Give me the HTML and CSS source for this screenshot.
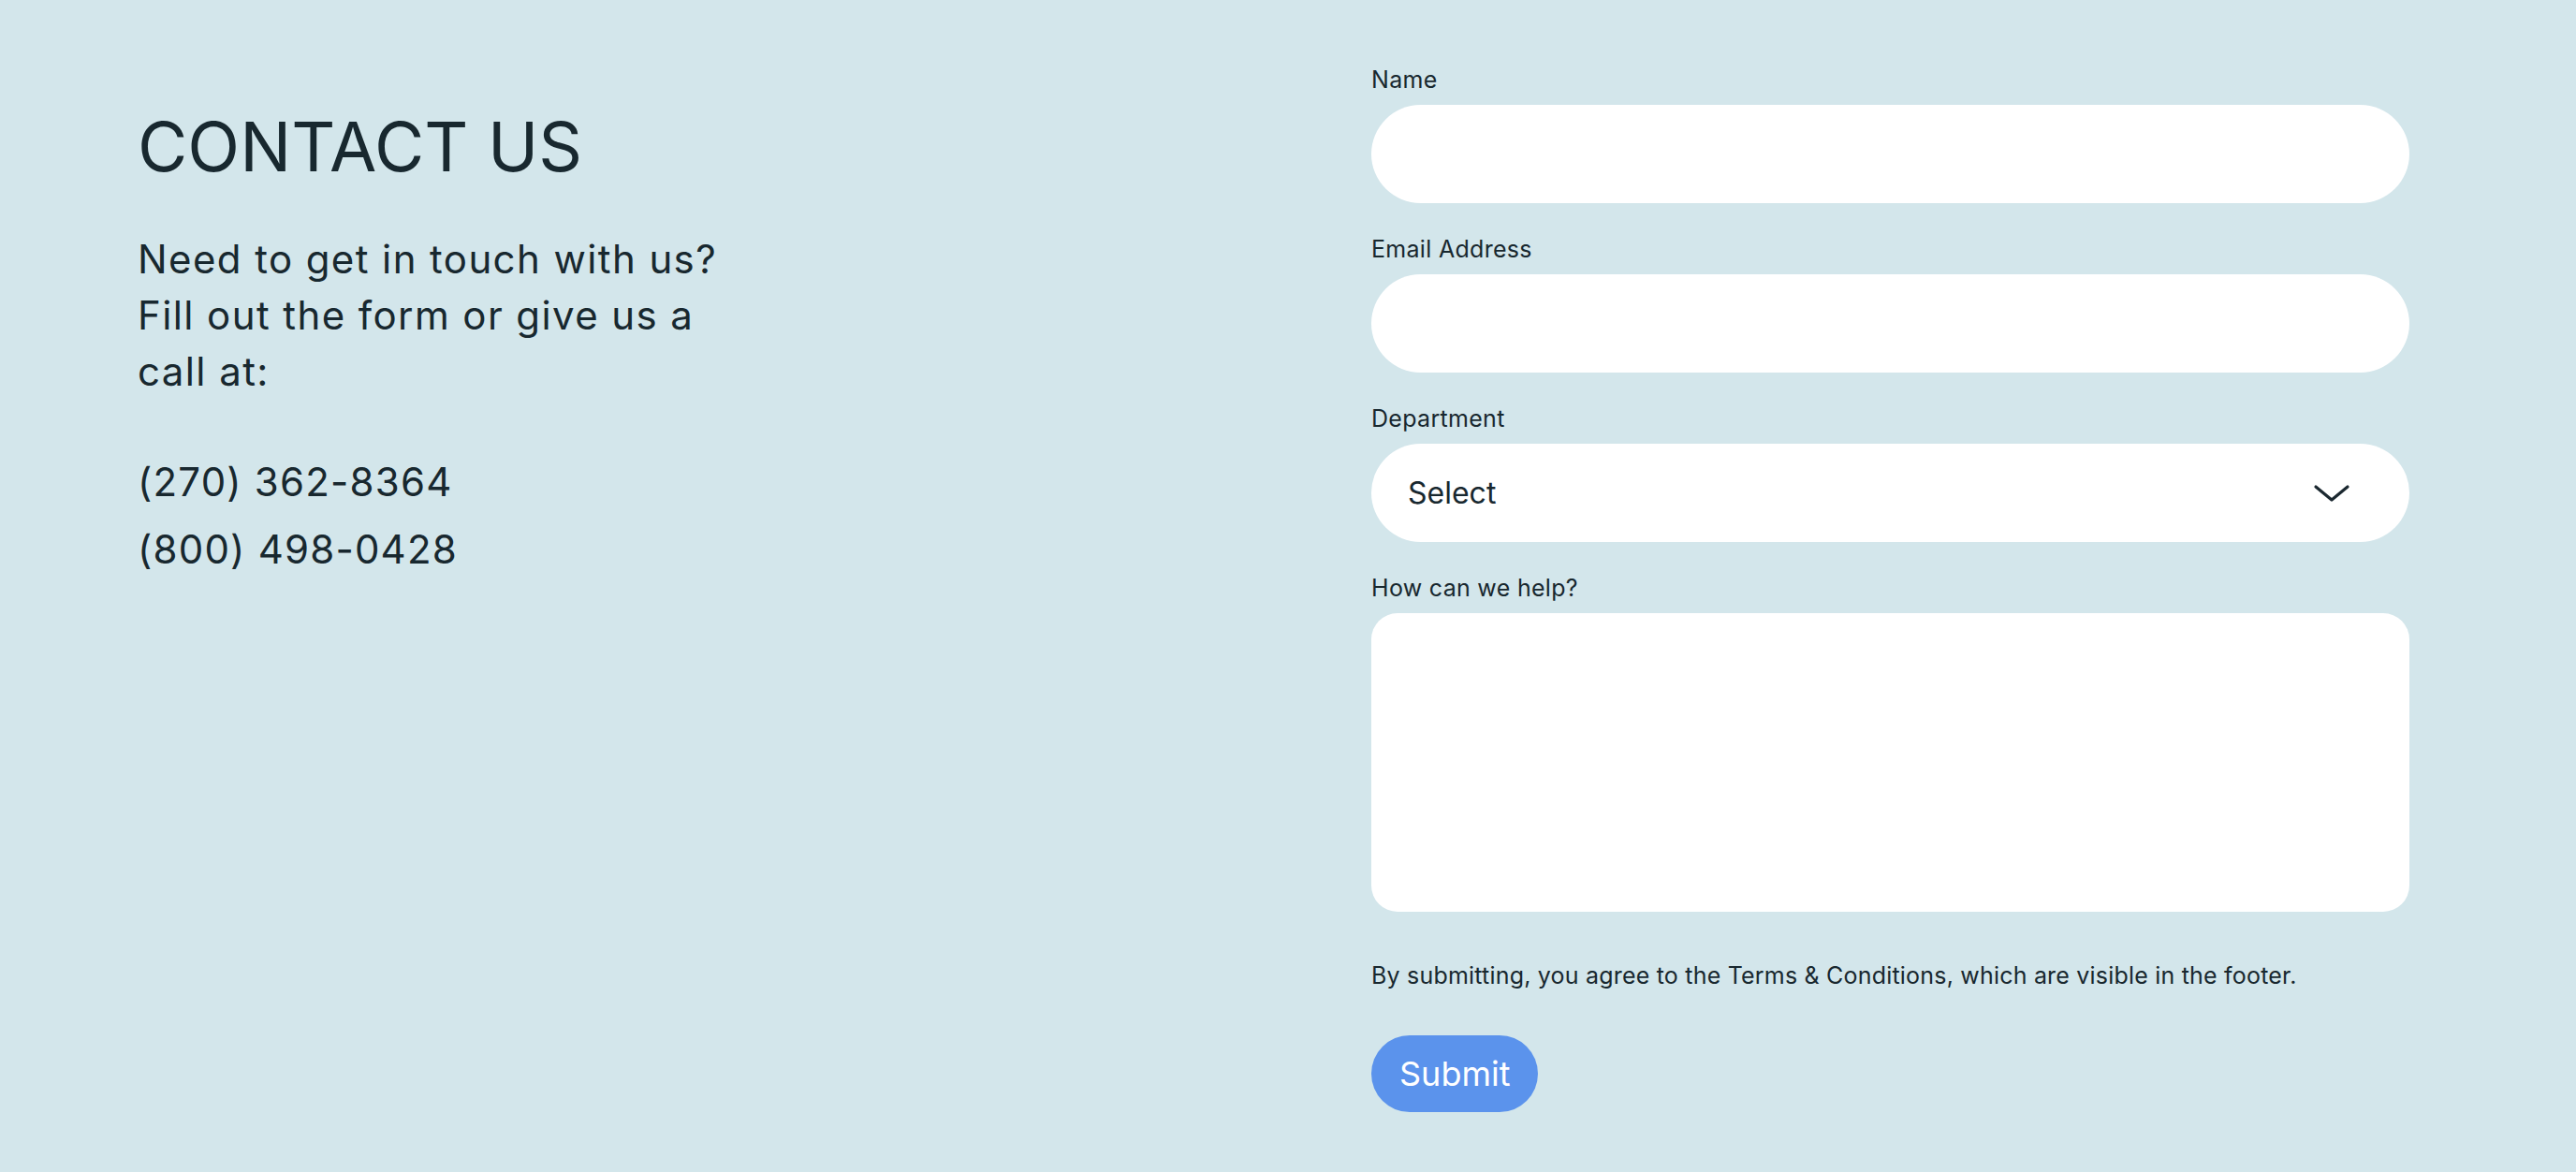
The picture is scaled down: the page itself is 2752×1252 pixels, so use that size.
FILE: index.html
```html
<!DOCTYPE html>
<html lang="en">
<head>
<meta charset="utf-8">
<title>Contact Us</title>
<link rel="stylesheet" href="styles.css">
</head>
<body>
<main class="contact">
  <section class="contact-intro">
    <h1 class="contact-title">CONTACT US</h1>
    <p class="contact-lead">Need to get in touch with us? Fill out the form or give us a call at:</p>
    <div class="contact-phones">
      <p class="phone">(270) 362-8364</p>
      <p class="phone">(800) 498-0428</p>
    </div>
  </section>

  <form class="contact-form">
    <div class="field">
      <label class="field-label" for="name">Name</label>
      <input class="field-input" id="name" type="text">
    </div>
    <div class="field">
      <label class="field-label" for="email">Email Address</label>
      <input class="field-input" id="email" type="email">
    </div>
    <div class="field">
      <label class="field-label" for="dept">Department</label>
      <div class="select-wrap">
        <select class="field-input field-select" id="dept">
          <option>Select</option>
        </select>
        <svg class="select-chevron" viewBox="0 0 40 20" width="40" height="20" aria-hidden="true">
          <path d="M3 3 L20 17 L37 3" fill="none" stroke="#1b2830" stroke-width="3.2" stroke-linecap="round" stroke-linejoin="round"/>
        </svg>
      </div>
    </div>
    <div class="field">
      <label class="field-label" for="help">How can we help?</label>
      <textarea class="field-input field-textarea" id="help"></textarea>
    </div>
    <p class="terms">By submitting, you agree to the Terms &amp; Conditions, which are visible in the footer.</p>
    <button class="submit" type="submit">Submit</button>
  </form>
</main>
</body>
</html>
```

FILE: styles.css
```css
* {
  box-sizing: border-box;
}

html, body {
  margin: 0;
  padding: 0;
}

body {
  background: #d3e6eb;
  color: #18282f;
  font-family: Inter, "Liberation Sans", sans-serif;
  min-height: 1252px;
}

.contact {
  display: flex;
  justify-content: space-between;
  align-items: flex-start;
  padding: 0 178px 0 147px;
}

/* Left column */
.contact-intro {
  padding-top: 113px;
}

.contact-title {
  margin: 0;
  font-size: 73px;
  font-weight: 400;
  line-height: 88px;
}

.contact-lead {
  margin: 46px 0 0;
  max-width: 650px;
  font-size: 42px;
  line-height: 60px;
  letter-spacing: 1.4px;
}

.contact-phones {
  margin-top: 58px;
  display: flex;
  flex-direction: column;
  gap: 12px;
}

.phone {
  margin: 0;
  font-size: 42px;
  line-height: 60px;
  letter-spacing: 1.2px;
}

/* Form */
.contact-form {
  width: 1109px;
  padding-top: 70px;
  display: flex;
  flex-direction: column;
}

.field {
  display: flex;
  flex-direction: column;
  gap: 12px;
  margin-bottom: 34px;
}

.field:nth-last-of-type(1) {
  margin-bottom: 0;
}

.field-label {
  font-size: 25px;
  line-height: 30px;
  letter-spacing: 0.3px;
}

.field-input {
  display: block;
  width: 100%;
  height: 105px;
  border: none;
  border-radius: 53px;
  background: #ffffff;
  font-family: inherit;
  font-size: 32px;
  color: #18282f;
  padding: 0 39px;
  outline: none;
}

.select-wrap {
  position: relative;
}

.field-select {
  appearance: none;
  -webkit-appearance: none;
}

.select-chevron {
  position: absolute;
  right: 63px;
  top: 43px;
  width: 40px;
  height: 20px;
  pointer-events: none;
}

.field-textarea {
  height: 319px;
  border-radius: 28px;
  resize: none;
  padding: 30px 39px;
}

.terms {
  margin: 53px 0 0;
  font-size: 25px;
  line-height: 30px;
  letter-spacing: 0.2px;
}

.submit {
  align-self: flex-start;
  margin-top: 49px;
  height: 82px;
  padding: 0 30px;
  border: none;
  border-radius: 41px;
  background: #5b93ec;
  color: #ffffff;
  font-family: inherit;
  font-size: 36px;
  line-height: 1;
}
```
